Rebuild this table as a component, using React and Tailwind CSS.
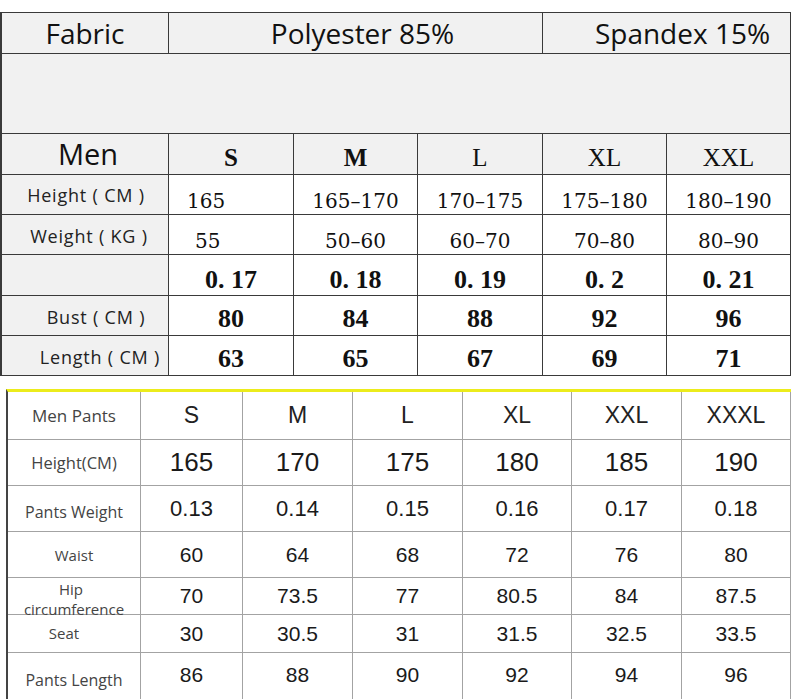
import React from "react";

const sans = { fontFamily: '"Open Sans", "Noto Sans", sans-serif' };

function TC({ className = "", children, style }) {
  return (
    <div
      className={"flex items-center justify-center border-r border-b border-[#3a3a3a] " + className}
      style={style}
    >
      {children}
    </div>
  );
}

function BC({ className = "", children }) {
  return (
    <div className={"flex items-center justify-center border-r border-b border-[#a3a3a3] bg-white " + className}>
      {children}
    </div>
  );
}

const topRows = [
  {
    label: "Height ( CM )",
    lpad: "pl-[2px] pt-[2px]",
    h: "h-[40px]",
    vals: ["165", "165–170", "170–175", "175–180", "180–190"],
    vcls: "font-['DejaVu_Serif',serif] text-[20px] pt-[12px]",
    first: "justify-start pl-[18px]",
  },
  {
    label: "Weight ( KG )",
    lpad: "pl-[8px] pt-[4px]",
    h: "h-[40px]",
    vals: ["55", "50–60", "60–70", "70–80", "80–90"],
    vcls: "font-['DejaVu_Serif',serif] text-[20px] pt-[12px]",
    first: "justify-start pl-[26px]",
  },
  {
    label: "",
    lpad: "",
    h: "h-[41px]",
    vals: ["0. 17", "0. 18", "0. 19", "0. 2", "0. 21"],
    vcls: "font-['Liberation_Serif',serif] font-bold text-[26px] pt-[8px]",
    first: "",
  },
  {
    label: "Bust ( CM )",
    lpad: "pl-[22px] pt-[4px]",
    h: "h-[40px]",
    vals: ["80", "84", "88", "92", "96"],
    vcls: "font-['Liberation_Serif',serif] font-bold text-[26px] pt-[6px]",
    first: "",
  },
  {
    label: "Length ( CM )",
    lpad: "pl-[30px] pt-[4px]",
    h: "h-[40px]",
    vals: ["63", "65", "67", "69", "71"],
    vcls: "font-['Liberation_Serif',serif] font-bold text-[26px] pt-[6px]",
    first: "",
  },
];

const bottomRows = [
  {
    label: "Height(CM)",
    h: "h-[46px]",
    vals: ["165", "170", "175", "180", "185", "190"],
    vcls: "text-[26px]",
    lcls: "pt-[2px] text-[16.5px]",
  },
  {
    label: "Pants Weight",
    h: "h-[46px]",
    vals: ["0.13", "0.14", "0.15", "0.16", "0.17", "0.18"],
    vcls: "text-[22px]",
    lcls: "pt-[6px] text-[16px]",
  },
  {
    label: "Waist",
    h: "h-[46px]",
    vals: ["60", "64", "68", "72", "76", "80"],
    vcls: "text-[21px]",
    lcls: "pt-[2px] text-[15px]",
  },
  {
    label: "hip",
    h: "h-[37px]",
    vals: ["70", "73.5", "77", "80.5", "84", "87.5"],
    vcls: "text-[21px]",
    lcls: "text-[15px]",
  },
  {
    label: "Seat",
    h: "h-[38px]",
    vals: ["30", "30.5", "31", "31.5", "32.5", "33.5"],
    vcls: "text-[21px]",
    lcls: "pr-[20px] text-[15px]",
  },
  {
    label: "Pants Length",
    h: "h-[48px]",
    vals: ["86", "88", "90", "92", "94", "96"],
    vcls: "text-[21px] pb-[4px]",
    lcls: "pt-[6px] text-[16px]",
  },
];

export default function App() {
  return (
    <div className="w-[794px] h-[699px] overflow-hidden bg-white">
      {/* Top table */}
      <div className="pt-[12px]">
        <div className="grid w-[791px] grid-cols-[167px_125px_124px_125px_124px_124px] border-l-2 border-t border-[#3a3a3a] text-[#111]">
          <TC className="h-[41px] bg-[#f1f1f1] text-[28px]" style={sans}>
            Fabric
          </TC>
          <TC className="col-span-3 h-[41px] bg-[#f1f1f1] text-[28px] pl-[14px]" style={sans}>
            Polyester 85%
          </TC>
          <TC className="col-span-2 h-[41px] bg-[#f1f1f1] text-[28px] pl-[32px]" style={sans}>
            Spandex 15%
          </TC>
          <TC className="col-span-6 h-[80px] bg-[#f1f1f1]" />

          <TC className="h-[41px] bg-[#f1f1f1] text-[29px] pl-[6px]" style={sans}>
            Men
          </TC>
          {["S", "M", "L", "XL", "XXL"].map((s) => (
            <TC
              key={s}
              className={
                "h-[41px] bg-[#f1f1f1] font-['Liberation_Serif',serif] text-[25px] pt-[8px] " +
                (s === "M" || s === "S" ? "font-bold" : "")
              }
            >
              {s}
            </TC>
          ))}

          {topRows.map((r, i) => (
            <React.Fragment key={i}>
              <TC
                className={r.h + " bg-[#f1f1f1] text-[18px] tracking-[0.8px] text-[#222] " + r.lpad}
                style={sans}
              >
                {r.label}
              </TC>
              {r.vals.map((v, j) => (
                <TC key={j} className={r.h + " bg-white " + r.vcls + " " + (j === 0 ? r.first : "")}>
                  {v}
                </TC>
              ))}
            </React.Fragment>
          ))}
        </div>
      </div>

      {/* Bottom table */}
      <div className="pt-[13px] pl-[6px]">
        <div className="grid w-[785px] grid-cols-[133px_102px_110px_110px_109px_110px_109px] border-l-2 border-l-[#444] border-t-[3px] border-t-[#ecec1c] text-[#1a1a1a] font-['Liberation_Sans',Arial,sans-serif]">
          <BC className="h-[48px] text-[17px] text-[#444]">
            <span style={sans}>Men Pants</span>
          </BC>
          {["S", "M", "L", "XL", "XXL", "XXXL"].map((s) => (
            <BC key={s} className="h-[48px] text-[23px] text-[#222]">
              {s}
            </BC>
          ))}
          {bottomRows.map((r, i) => (
            <React.Fragment key={i}>
              <BC className={r.h + " text-[#444] " + r.lcls}>
                {r.label === "hip" ? (
                  <div className="flex flex-col items-center leading-[20px] pt-[6px]" style={sans}>
                    <span className="pr-[6px]">Hip</span>
                    <span>circumference</span>
                  </div>
                ) : (
                  <span style={sans}>{r.label}</span>
                )}
              </BC>
              {r.vals.map((v, j) => (
                <BC key={j} className={r.h + " " + r.vcls}>
                  {v}
                </BC>
              ))}
            </React.Fragment>
          ))}
        </div>
      </div>
    </div>
  );
}
